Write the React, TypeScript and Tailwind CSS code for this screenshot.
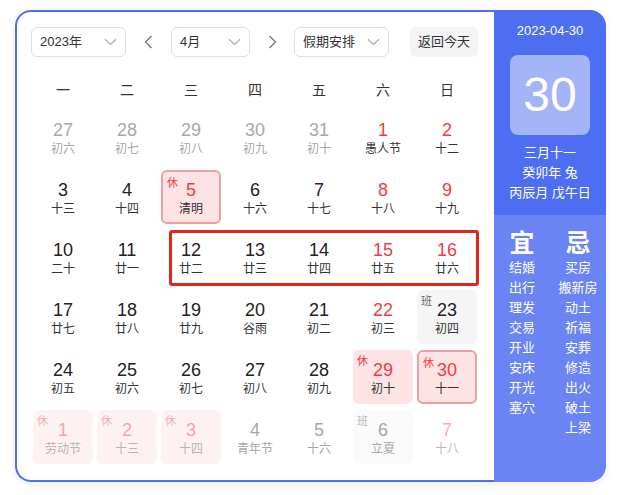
type Kind = "normal" | "weekend" | "other" | "rest" | "work";

type Day = {
  d: number;
  lunar: string;
  kind?: Kind;
  faded?: boolean;
  lunarDark?: boolean;
  ring?: boolean;
};

const weeks: Day[][] = [
  [
    { d: 27, lunar: "初六", kind: "other" },
    { d: 28, lunar: "初七", kind: "other" },
    { d: 29, lunar: "初八", kind: "other" },
    { d: 30, lunar: "初九", kind: "other" },
    { d: 31, lunar: "初十", kind: "other" },
    { d: 1, lunar: "愚人节", kind: "weekend" },
    { d: 2, lunar: "十二", kind: "weekend" },
  ],
  [
    { d: 3, lunar: "十三" },
    { d: 4, lunar: "十四" },
    { d: 5, lunar: "清明", kind: "rest", ring: true },
    { d: 6, lunar: "十六" },
    { d: 7, lunar: "十七" },
    { d: 8, lunar: "十八", kind: "weekend" },
    { d: 9, lunar: "十九", kind: "weekend" },
  ],
  [
    { d: 10, lunar: "二十" },
    { d: 11, lunar: "廿一" },
    { d: 12, lunar: "廿二" },
    { d: 13, lunar: "廿三" },
    { d: 14, lunar: "廿四" },
    { d: 15, lunar: "廿五", kind: "weekend" },
    { d: 16, lunar: "廿六", kind: "weekend" },
  ],
  [
    { d: 17, lunar: "廿七" },
    { d: 18, lunar: "廿八" },
    { d: 19, lunar: "廿九" },
    { d: 20, lunar: "谷雨" },
    { d: 21, lunar: "初二" },
    { d: 22, lunar: "初三", kind: "weekend" },
    { d: 23, lunar: "初四", kind: "work" },
  ],
  [
    { d: 24, lunar: "初五" },
    { d: 25, lunar: "初六" },
    { d: 26, lunar: "初七" },
    { d: 27, lunar: "初八" },
    { d: 28, lunar: "初九" },
    { d: 29, lunar: "初十", kind: "rest" },
    { d: 30, lunar: "十一", kind: "rest", ring: true },
  ],
  [
    { d: 1, lunar: "劳动节", kind: "rest", faded: true },
    { d: 2, lunar: "十三", kind: "rest", faded: true },
    { d: 3, lunar: "十四", kind: "rest", faded: true },
    { d: 4, lunar: "青年节", kind: "other" },
    { d: 5, lunar: "十六", kind: "other" },
    { d: 6, lunar: "立夏", kind: "work", faded: true },
    { d: 7, lunar: "十八", kind: "weekend", faded: true },
  ],
];

const good = ["结婚", "出行", "理发", "交易", "开业", "安床", "开光", "塞穴"];
const bad = ["买房", "搬新房", "动土", "祈福", "安葬", "修造", "出火", "破土", "上梁"];

const font = { fontFamily: '"Liberation Sans", "Noto Sans CJK SC", sans-serif' };

function ChevronDown() {
  return (
    <svg width="13" height="8" viewBox="0 0 13 8" fill="none">
      <path d="M1 1.2L6.5 6.5L12 1.2" stroke="#a8abb2" strokeWidth="1.2" />
    </svg>
  );
}

function Arrow({ dir }: { dir: "l" | "r" }) {
  return (
    <svg width="9" height="14" viewBox="0 0 9 14" fill="none">
      <path d={dir === "l" ? "M7.5 1L1.5 7L7.5 13" : "M1.5 1L7.5 7L1.5 13"} stroke="#7a7a7a" strokeWidth="1.4" />
    </svg>
  );
}

function Select({ label, w }: { label: string; w: string }) {
  return (
    <div className={`${w} h-[30px] flex items-center justify-between pl-[8px] pr-[8px] border border-[#dcdfe6] rounded-[6px] text-[13px] text-[#333]`}>
      <span>{label}</span>
      <ChevronDown />
    </div>
  );
}

function Cell({ day }: { day: Day }) {
  const k = day.kind ?? "normal";
  let box = "";
  let num = "text-[#222]";
  let lunar = "text-[#333]";
  if (k === "other") {
    num = "text-[#a8a8a8]";
    lunar = "text-[#a8a8a8]";
  } else if (k === "weekend") {
    num = day.faded ? "text-[#f5b0b5]" : "text-[#f23a45]";
    lunar = day.faded ? "text-[#bbbbbb]" : "text-[#333]";
  } else if (k === "rest") {
    if (day.faded) {
      box = "bg-[#fdf1f1]";
      num = "text-[#f3a6ad]";
      lunar = "text-[#b5b5b5]";
    } else {
      box = day.ring ? "bg-[#fde3e3] border-2 border-[#e8a0a3]" : "bg-[#fde3e3]";
      num = "text-[#f23a45]";
    }
  } else if (k === "work") {
    if (day.faded) {
      box = "bg-[#fafafa]";
      num = "text-[#a8a8a8]";
      lunar = "text-[#a8a8a8]";
    } else {
      box = "bg-[#f5f5f5]";
    }
  }
  return (
    <div className="h-[60px] px-[2px] py-[3px]">
      <div className={`relative h-full rounded-[6px] flex flex-col items-center justify-center pt-[2px] ${box}`}>
        {k === "rest" && (
          <span className={`absolute top-[4px] left-[4px] text-[11px] leading-[14px] ${day.faded ? "text-[#f5b0b5]" : "text-[#f23a45]"}`}>
            休
          </span>
        )}
        {k === "work" && (
          <span className={`absolute top-[4px] left-[4px] text-[11px] leading-[14px] ${day.faded ? "text-[#bbbbbb]" : "text-[#666]"}`}>
            班
          </span>
        )}
        <span className={`text-[18px] leading-[22px] ${num}`}>{day.d}</span>
        <span className={`text-[12px] leading-[16px] ${lunar}`}>{day.lunar}</span>
      </div>
    </div>
  );
}

export default function App() {
  return (
    <div className="w-[620px] h-[495px] bg-white pt-[10px] pl-[15px]" style={font}>
      <div className="flex w-[591px] h-[472px] rounded-[16px] shadow-[0_2px_8px_rgba(0,0,0,0.08)]">
        {/* calendar */}
        <div className="w-[479px] h-full border-2 border-r-0 border-[#4e6ef2] rounded-l-[16px] pl-[14px] pt-[15px] bg-white">
          <div className="flex items-center h-[30px]">
            <Select label="2023年" w="w-[95px]" />
            <div className="w-[45px] flex justify-center">
              <Arrow dir="l" />
            </div>
            <Select label="4月" w="w-[79px]" />
            <div className="w-[44px] flex justify-center">
              <Arrow dir="r" />
            </div>
            <Select label="假期安排" w="w-[95px]" />
            <div className="ml-[21px] w-[68px] h-[30px] flex items-center justify-center rounded-[6px] bg-[#f4f4f5] text-[13px] text-[#333]">
              返回今天
            </div>
          </div>

          <div className="grid grid-cols-7 w-[448px] h-[50px] pt-[16px]">
            {["一", "二", "三", "四", "五", "六", "日"].map((w) => (
              <div key={w} className="flex items-center justify-center text-[14px] text-[#333]">
                {w}
              </div>
            ))}
          </div>

          <div className="relative w-[448px]">
            <div className="grid grid-cols-7">
              {weeks.flat().map((d, i) => (
                <Cell key={i} day={d} />
              ))}
            </div>
            {/* highlight annotation */}
            <div className="absolute left-[138px] top-[123px] w-[310px] h-[56px] border-[3px] border-[#e3261b] rounded-[3px]" />
          </div>
        </div>

        {/* side panel */}
        <div className="flex-1 h-full flex flex-col rounded-r-[16px] overflow-hidden text-white">
          <div className="bg-[#4e6ef2] flex flex-col items-center pt-[11px] pb-[12px]">
            <div className="text-[13px] leading-[20px]">2023-04-30</div>
            <div className="mt-[14px] w-[80px] h-[80px] rounded-[8px] bg-[#a3b4f7] flex items-center justify-center text-[48px] leading-none">
              30
            </div>
            <div className="mt-[8px] text-[13px] leading-[20px] text-center">
              <div>三月十一</div>
              <div>癸卯年 兔</div>
              <div>丙辰月 戊午日</div>
            </div>
          </div>
          <div className="flex-1 bg-[#6b84f3] grid grid-cols-2 content-start pt-[14px]">
            <div className="flex flex-col items-center">
              <div className="text-[25px] leading-[28px] font-bold">宜</div>
              <div className="mt-[1px] flex flex-col items-center text-[13px] leading-[20px]">
                {good.map((g) => (
                  <span key={g}>{g}</span>
                ))}
              </div>
            </div>
            <div className="flex flex-col items-center">
              <div className="text-[25px] leading-[28px] font-bold">忌</div>
              <div className="mt-[1px] flex flex-col items-center text-[13px] leading-[20px]">
                {bad.map((g) => (
                  <span key={g}>{g}</span>
                ))}
              </div>
            </div>
          </div>
        </div>
      </div>
    </div>
  );
}
